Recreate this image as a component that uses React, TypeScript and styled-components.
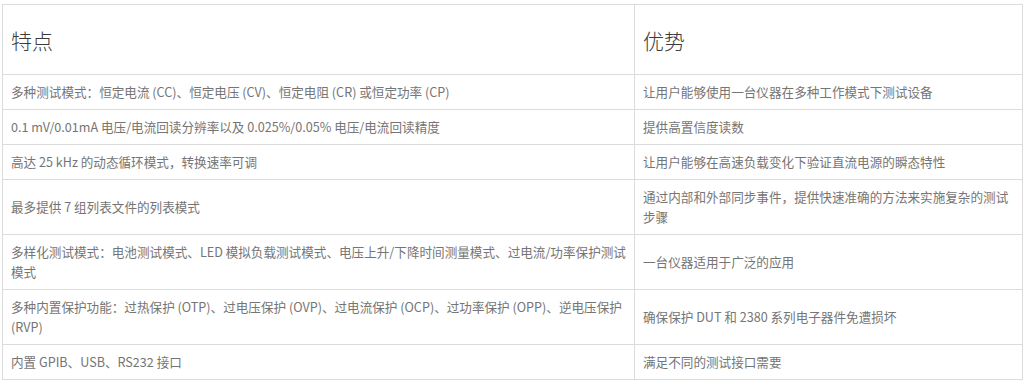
import styled, { createGlobalStyle } from 'styled-components';

const GlobalStyle = createGlobalStyle`
  body {
    margin: 0;
    background: #fff;
    font-family: "Noto Sans CJK SC", "Noto Sans", sans-serif;
  }
`;

const Page = styled.div`
  padding: 4px 4px 0 2px;
`;

const Table = styled.table`
  width: 1021px;
  border-collapse: collapse;
  table-layout: fixed;
`;

const HeadCell = styled.th`
  height: 69px;
  padding: 0 8px;
  border: 1px solid #dcdcdc;
  text-align: left;
  font-weight: 300;
  font-size: 21px;
  color: #3a3a3a;
  vertical-align: middle;
`;

const Cell = styled.td`
  padding: 7px 8px;
  border: 1px solid #dcdcdc;
  font-size: 12.6px;
  line-height: 20px;
  color: #757575;
  vertical-align: middle;
`;

const rows: [string, string][] = [
  ['多种测试模式：恒定电流 (CC)、恒定电压 (CV)、恒定电阻 (CR) 或恒定功率 (CP)', '让用户能够使用一台仪器在多种工作模式下测试设备'],
  ['0.1 mV/0.01mA 电压/电流回读分辨率以及 0.025%/0.05% 电压/电流回读精度', '提供高置信度读数'],
  ['高达 25 kHz 的动态循环模式，转换速率可调', '让用户能够在高速负载变化下验证直流电源的瞬态特性'],
  ['最多提供 7 组列表文件的列表模式', '通过内部和外部同步事件，提供快速准确的方法来实施复杂的测试步骤'],
  ['多样化测试模式：电池测试模式、LED 模拟负载测试模式、电压上升/下降时间测量模式、过电流/功率保护测试模式', '一台仪器适用于广泛的应用'],
  ['多种内置保护功能：过热保护 (OTP)、过电压保护 (OVP)、过电流保护 (OCP)、过功率保护 (OPP)、逆电压保护 (RVP)', '确保保护 DUT 和 2380 系列电子器件免遭损坏'],
  ['内置 GPIB、USB、RS232 接口', '满足不同的测试接口需要'],
];

export default function App() {
  return (
    <Page>
      <GlobalStyle />
      <Table>
        <colgroup>
          <col style={{ width: 632 }} />
          <col />
        </colgroup>
        <thead>
          <tr>
            <HeadCell>特点</HeadCell>
            <HeadCell>优势</HeadCell>
          </tr>
        </thead>
        <tbody>
          {rows.map(([feature, benefit]) => (
            <tr key={feature}>
              <Cell>{feature}</Cell>
              <Cell>{benefit}</Cell>
            </tr>
          ))}
        </tbody>
      </Table>
    </Page>
  );
}
